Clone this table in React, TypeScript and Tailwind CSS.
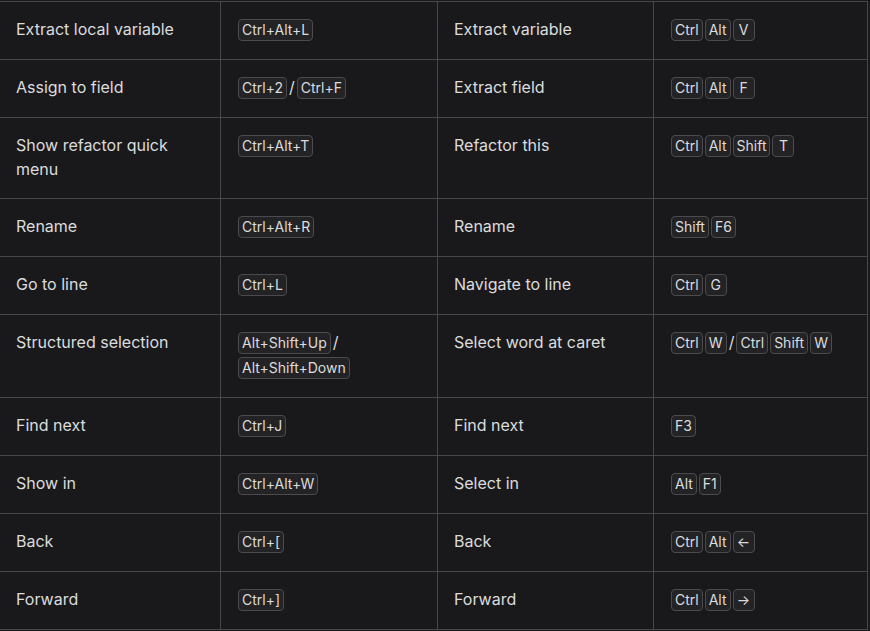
import React from "react";

type Part = string[] | "/";

const rows: { a: string; b: Part[]; c: string; d: Part[] }[] = [
  { a: "Extract local variable", b: [["Ctrl+Alt+L"]], c: "Extract variable", d: [["Ctrl", "Alt", "V"]] },
  { a: "Assign to field", b: [["Ctrl+2"], "/", ["Ctrl+F"]], c: "Extract field", d: [["Ctrl", "Alt", "F"]] },
  { a: "Show refactor quick menu", b: [["Ctrl+Alt+T"]], c: "Refactor this", d: [["Ctrl", "Alt", "Shift", "T"]] },
  { a: "Rename", b: [["Ctrl+Alt+R"]], c: "Rename", d: [["Shift", "F6"]] },
  { a: "Go to line", b: [["Ctrl+L"]], c: "Navigate to line", d: [["Ctrl", "G"]] },
  {
    a: "Structured selection",
    b: [["Alt+Shift+Up"], "/", ["Alt+Shift+Down"]],
    c: "Select word at caret",
    d: [["Ctrl", "W"], "/", ["Ctrl", "Shift", "W"]],
  },
  { a: "Find next", b: [["Ctrl+J"]], c: "Find next", d: [["F3"]] },
  { a: "Show in", b: [["Ctrl+Alt+W"]], c: "Select in", d: [["Alt", "F1"]] },
  { a: "Back", b: [["Ctrl+["]], c: "Back", d: [["Ctrl", "Alt", "←"]] },
  { a: "Forward", b: [["Ctrl+]"]], c: "Forward", d: [["Ctrl", "Alt", "→"]] },
];

function Keys({ parts }: { parts: Part[] }) {
  return (
    <div className="leading-[25px]">
      {parts.map((p, i) =>
        p === "/" ? (
          <span key={i} className="mx-px">/</span>
        ) : (
          p.map((k, j) => (
            <kbd
              key={i + "-" + j}
              className="inline-block mx-px min-w-[22px] px-[3px] text-center text-[14px] leading-[20px] border border-[#4b4b4e] bg-[#232326] rounded-[4px] text-[#dcdcdd]"
              style={{ fontFamily: "Inter, 'Noto Sans', sans-serif" }}
            >
              {k}
            </kbd>
          ))
        )
      )}
    </div>
  );
}

export default function App() {
  const cell = "border-r border-b border-[#474749] pl-4 pr-4 pt-[15px] pb-[17px]";
  return (
    <div
      className="min-h-screen w-full bg-[#19191c] pt-px text-[#dcdcdd] text-[16px] leading-6"
      style={{ fontFamily: "Inter, 'Noto Sans', sans-serif" }}
    >
      <div className="grid grid-cols-[221px_217px_216px_214px] border-t border-[#474749] w-[868px]">
        {rows.map((r, i) => (
          <React.Fragment key={i}>
            <div className={cell}>{r.a}</div>
            <div className={cell}>
              <Keys parts={r.b} />
            </div>
            <div className={cell}>{r.c}</div>
            <div className={cell}>
              <Keys parts={r.d} />
            </div>
          </React.Fragment>
        ))}
      </div>
    </div>
  );
}
